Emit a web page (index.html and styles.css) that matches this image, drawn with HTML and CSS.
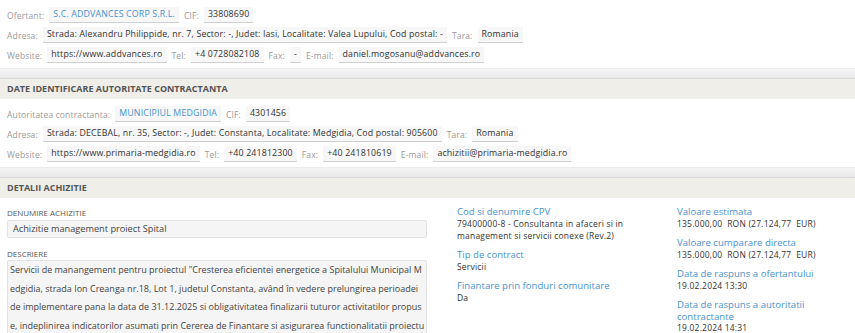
FILE: index.html
```html
<!DOCTYPE html>
<html lang="en">
<head>
    <meta charset="UTF-8">
    <title>Detalii achizitie</title>
    <link rel="stylesheet" href="styles.css">
</head>
<body>
    <!-- Ofertant -->
    <div class="panel info">
        <div class="info-row">
            <span class="lbl">Ofertant:</span><span class="val link">S.C. ADDVANCES CORP S.R.L.</span>
            <span class="lbl">CIF:</span><span class="val">33808690</span>
        </div>
        <div class="info-row">
            <span class="lbl">Adresa:</span><span class="val">Strada: Alexandru Philippide, nr. 7, Sector: -, Judet: Iasi, Localitate: Valea Lupului, Cod postal: -</span>
            <span class="lbl">Tara:</span><span class="val">Romania</span>
        </div>
        <div class="info-row">
            <span class="lbl">Website:</span><span class="val">https://www.addvances.ro</span>
            <span class="lbl">Tel:</span><span class="val">+4 0728082108</span>
            <span class="lbl">Fax:</span><span class="val">-</span>
            <span class="lbl">E-mail:</span><span class="val">daniel.mogosanu@addvances.ro</span>
        </div>
    </div>

    <div class="panel-sep"></div>
    <div class="panel-head">DATE IDENTIFICARE AUTORITATE CONTRACTANTA</div>

    <!-- Autoritate contractanta -->
    <div class="panel info">
        <div class="info-row">
            <span class="lbl">Autoritatea contractanta:</span><span class="val link">MUNICIPIUL MEDGIDIA</span>
            <span class="lbl">CIF:</span><span class="val">4301456</span>
        </div>
        <div class="info-row">
            <span class="lbl">Adresa:</span><span class="val">Strada: DECEBAL, nr. 35, Sector: -, Judet: Constanta, Localitate: Medgidia, Cod postal: 905600</span>
            <span class="lbl">Tara:</span><span class="val">Romania</span>
        </div>
        <div class="info-row">
            <span class="lbl">Website:</span><span class="val">https://www.primaria-medgidia.ro</span>
            <span class="lbl">Tel:</span><span class="val">+40 241812300</span>
            <span class="lbl">Fax:</span><span class="val">+40 241810619</span>
            <span class="lbl">E-mail:</span><span class="val">achizitii@primaria-medgidia.ro</span>
        </div>
    </div>

    <div class="panel-sep"></div>
    <div class="panel-head">DETALII ACHIZITIE</div>

    <!-- Detalii achizitie -->
    <div class="panel details">
        <div class="col-main">
            <div class="field-label">DENUMIRE ACHIZITIE</div>
            <div class="field-box">Achizitie management proiect Spital</div>

            <div class="field-label second">DESCRIERE</div>
            <div class="field-box desc">Servicii de manangement pentru proiectul "Cresterea eficientei energetice a Spitalului Municipal Medgidia, strada Ion Creanga nr.18, Lot 1, judetul Constanta, având în vedere prelungirea perioadei de implementare pana la data de 31.12.2025 si obligativitatea finalizarii tuturor activitatilor propuse, indeplinirea indicatorilor asumati prin Cererea de Finantare si asigurarea functionalitatii proiectului. <a href="#" class="more">mai putin</a></div>
        </div>

        <div class="col-side">
            <div class="item">
                <div class="item-title">Cod si denumire CPV</div>
                <div class="item-val">79400000-8 - Consultanta in afaceri si in management si servicii conexe (Rev.2)</div>
            </div>
            <div class="item">
                <div class="item-title">Tip de contract</div>
                <div class="item-val">Servicii</div>
            </div>
            <div class="item">
                <div class="item-title">Finantare prin fonduri comunitare</div>
                <div class="item-val">Da</div>
            </div>
        </div>

        <div class="col-side">
            <div class="item">
                <div class="item-title">Valoare estimata</div>
                <div class="item-val">135.000,00&nbsp; RON (27.124,77&nbsp; EUR)</div>
            </div>
            <div class="item">
                <div class="item-title">Valoare cumparare directa</div>
                <div class="item-val">135.000,00&nbsp; RON (27.124,77&nbsp; EUR)</div>
            </div>
            <div class="item">
                <div class="item-title">Data de raspuns a ofertantului</div>
                <div class="item-val">19.02.2024 13:30</div>
            </div>
            <div class="item">
                <div class="item-title">Data de raspuns a autoritatii contractante</div>
                <div class="item-val">19.02.2024 14:31</div>
            </div>
        </div>
    </div>
</body>
</html>
```

FILE: styles.css
```css
/* Reset */
* {
    box-sizing: border-box;
    margin: 0;
    padding: 0;
}

body {
    font-family: 'Open Sans', 'Noto Sans', sans-serif;
    font-size: 8.8px;
    color: #333;
    background: #fff;
    overflow: hidden;
}

/* Info panels (ofertant / autoritate) */
.panel.info {
    padding: 5px 7px 3px;
}

.info-row {
    height: 20px;
    display: flex;
    align-items: center;
    white-space: nowrap;
    letter-spacing: 0.15px;
}

.lbl {
    font-size: 8.5px;
    color: #9a9a9a;
    margin-right: 5px;
}

.val {
    background-color: #f7f7f7;
    border-bottom: 1px solid #d0d0d0;
    padding: 1px 4px 2px;
    margin-right: 5px;
    color: #333;
}

.val.link {
    color: #4a93cf;
}

/* Section separators */
.panel-sep {
    height: 11px;
    background: linear-gradient(#f5f5f5, #e8e8e8);
    border-top: 1px solid #ebebeb;
    border-bottom: 1px solid #d9d9d9;
}

.panel-head {
    height: 20px;
    line-height: 20px;
    padding-left: 7px;
    background-color: #efeee8;
    font-weight: bold;
    font-size: 9px;
    color: #555;
}

/* Details */
.panel.details {
    display: grid;
    grid-template-columns: 420px 190px 1fr;
    column-gap: 30px;
    padding: 8px 0 0 7px;
}

.col-main {
    padding-top: 1px;
}

.field-label {
    font-size: 8px;
    line-height: 12px;
    color: #555;
}

.field-label.second {
    margin-top: 10px;
}

.field-box {
    margin-top: 1px;
    background-color: #f5f5f5;
    border: 1px solid #e2e2e2;
    border-radius: 2px;
    height: 18px;
    line-height: 16px;
    padding: 0 5px;
    font-size: 9.2px;
    color: #444;
}

.field-box.desc {
    margin-top: 0;
    height: auto;
    padding: 0 1px 1px 2px;
    line-height: 18.5px;
    font-size: 9px;
    word-break: break-all;
}

.more {
    color: #4a93cf;
    text-decoration: none;
}

.item {
    margin-bottom: 7.5px;
}

.item-title {
    font-size: 9.6px;
    line-height: 11.5px;
    color: #4a93cf;
}

.item-val {
    font-size: 8.5px;
    line-height: 12px;
    letter-spacing: 0.2px;
    color: #333;
}
```
